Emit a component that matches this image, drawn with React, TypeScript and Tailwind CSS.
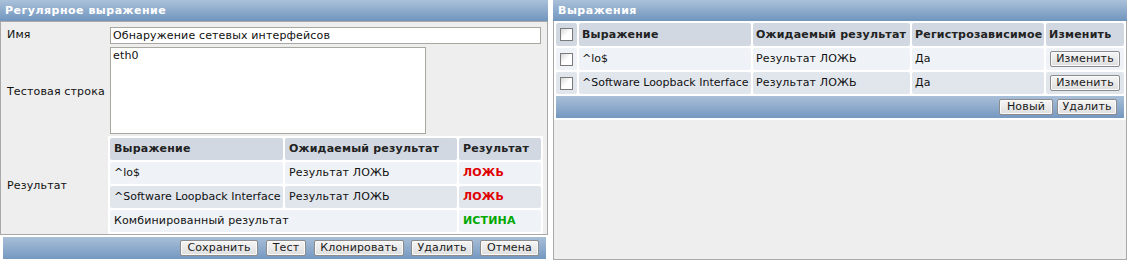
import React from "react";

const font = { fontFamily: '"DejaVu Sans", Verdana, sans-serif' };

function Btn({ children, className = "" }: { children: React.ReactNode; className?: string }) {
  return (
    <button
      type="button"
      className={
        "h-[16px] shrink-0 rounded-[2px] border border-[#8c8c8c] bg-gradient-to-b from-[#f6f6f6] to-[#dedede] px-0 text-[11px] leading-[14px] tracking-[0.15px] text-[#1a1a1a] shadow-[inset_0_0_0_1px_#fafafa] " +
        className
      }
    >
      {children}
    </button>
  );
}

function Check() {
  return (
    <span className="block h-[13px] w-[13px] border border-[#7a7a7a] bg-gradient-to-br from-[#d8d8d8] via-white to-white" />
  );
}

function PanelHead({ title }: { title: string }) {
  return (
    <div className="h-[21px] shrink-0 bg-gradient-to-b from-[#aac1da] to-[#7195bd] pl-[5px] text-[11px] font-bold leading-[21px] tracking-[0.5px] text-white">
      {title}
    </div>
  );
}

const bar = "bg-gradient-to-b from-[#a9bfd8] to-[#7598c0]";
const th = "rounded-[2px] bg-[#d1d8e1] font-bold tracking-[0.2px] text-[#222]";

const results = [
  { expr: "^lo$", expected: "Результат ЛОЖЬ", res: "ЛОЖЬ" },
  { expr: "^Software Loopback Interface", expected: "Результат ЛОЖЬ", res: "ЛОЖЬ" },
];

export default function App() {
  return (
    <div className="flex h-[260px] w-[1127px] bg-white text-[11px] tracking-[0.15px] text-[#111]" style={font}>
      {/* left: regex editor */}
      <div className="flex w-[548px] shrink-0 flex-col">
        <PanelHead title="Регулярное выражение" />
        <div className="grid grid-cols-[109px_431px] items-center border border-[#a9a9a9] bg-[#eeeeee] pt-[5px]">
          <div className="pl-[6px]">Имя</div>
          <input
            readOnly
            defaultValue="Обнаружение сетевых интерфейсов"
            className="h-[17px] w-[431px] border border-[#a8a8a0] bg-white px-[2px] text-[11px] tracking-[0.15px] text-[#111] outline-none"
            style={font}
          />

          <div className="mt-[6px] pl-[6px]">Тестовая строка</div>
          <textarea
            readOnly
            defaultValue="eth0"
            className="mt-[3px] h-[87px] w-[316px] resize-none border border-[#a8a8a0] bg-white px-[2px] py-[1px] text-[11px] leading-[13px] tracking-[0.15px] text-[#111] outline-none"
            style={font}
          />

          <div className="mt-[5px] pl-[6px]">Результат</div>
          <div className="-ml-[2px] mt-[2px] grid w-[435px] grid-cols-[173px_172px_82px] gap-[2px] bg-white p-[2px]">
            <div className={`h-[22px] pl-[4px] leading-[22px] ${th}`}>Выражение</div>
            <div className={`h-[22px] pl-[4px] leading-[22px] ${th}`}>Ожидаемый результат</div>
            <div className={`h-[22px] pl-[4px] leading-[22px] ${th}`}>Результат</div>
            {results.map((r, i) => {
              const bg = i % 2 === 0 ? "bg-[#eff3f7]" : "bg-[#e1e6ed]";
              return (
                <React.Fragment key={r.expr}>
                  <div className={`h-[22px] whitespace-nowrap rounded-[2px] pl-[4px] leading-[22px] tracking-normal ${bg}`}>{r.expr}</div>
                  <div className={`h-[22px] rounded-[2px] pl-[4px] leading-[22px] ${bg}`}>{r.expected}</div>
                  <div className={`h-[22px] rounded-[2px] pl-[4px] font-bold leading-[22px] text-[#e00000] ${bg}`}>{r.res}</div>
                </React.Fragment>
              );
            })}
            <div className="col-span-2 h-[22px] rounded-[2px] bg-[#eff3f7] pl-[4px] leading-[22px]">Комбинированный результат</div>
            <div className="h-[22px] rounded-[2px] bg-[#eff3f7] pl-[4px] font-bold leading-[22px] text-[#00a800]">ИСТИНА</div>
          </div>
        </div>
        <div className={`ml-[3px] mr-[2px] mt-[2px] flex h-[22px] items-center justify-end gap-[7px] pr-[7px] ${bar}`}>
          <Btn className="w-[78px]">Сохранить</Btn>
          <Btn className="ml-[1px] w-[40px]">Тест</Btn>
          <Btn className="ml-[1px] w-[90px]">Клонировать</Btn>
          <Btn className="w-[62px]">Удалить</Btn>
          <Btn className="w-[59px]">Отмена</Btn>
        </div>
      </div>

      {/* right: expressions list */}
      <div className="ml-[5px] flex w-[574px] shrink-0 flex-col">
        <PanelHead title="Выражения" />
        <div className="flex-1 border-x border-b border-[#a9a9a9] bg-[#eeeeee]">
          <div className="grid grid-cols-[21px_172px_157px_132px_78px] gap-[2px] bg-white p-[2px]">
            <div className="flex h-[23px] items-center justify-center rounded-[2px] bg-[#d1d8e1]">
              <Check />
            </div>
            <div className={`h-[23px] pl-[3px] leading-[23px] ${th}`}>Выражение</div>
            <div className={`h-[23px] pl-[3px] leading-[23px] ${th}`}>Ожидаемый результат</div>
            <div className={`h-[23px] pl-[3px] leading-[23px] ${th}`}>Регистрозависимое</div>
            <div className={`h-[23px] pl-[3px] leading-[23px] ${th}`}>Изменить</div>
            {results.map((r, i) => {
              const bg = i % 2 === 0 ? "bg-[#eff3f7]" : "bg-[#e1e6ed]";
              return (
                <React.Fragment key={r.expr}>
                  <div className={`flex h-[22px] items-center justify-center rounded-[2px] ${bg}`}>
                    <Check />
                  </div>
                  <div className={`h-[22px] whitespace-nowrap rounded-[2px] pl-[3px] leading-[22px] tracking-normal ${bg}`}>{r.expr}</div>
                  <div className={`h-[22px] rounded-[2px] pl-[3px] leading-[22px] ${bg}`}>{r.expected}</div>
                  <div className={`h-[22px] rounded-[2px] pl-[3px] leading-[22px] ${bg}`}>Да</div>
                  <div className={`flex h-[22px] items-center justify-center rounded-[2px] ${bg}`}>
                    <Btn className="w-[70px]">Изменить</Btn>
                  </div>
                </React.Fragment>
              );
            })}
            <div className={`col-span-5 flex h-[22px] items-center justify-end gap-[4px] pr-[7px] ${bar}`}>
              <Btn className="w-[54px]">Новый</Btn>
              <Btn className="w-[60px]">Удалить</Btn>
            </div>
          </div>
        </div>
      </div>
    </div>
  );
}
